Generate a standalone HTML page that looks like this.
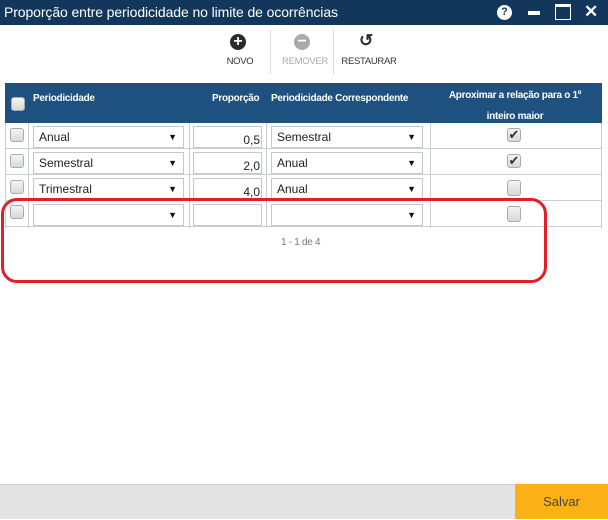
<!DOCTYPE html>
<html><head><style>
*{box-sizing:border-box;margin:0;padding:0}
body{width:608px;height:519px;position:relative;background:#fff;font-family:"Liberation Sans",sans-serif;overflow:hidden}
.a{position:absolute}
.tb{left:0;top:0;width:608px;height:25px;background:#13365b;color:#fff;font-size:14px;line-height:25px;padding-left:4px;letter-spacing:-0.1px}
.cb{width:14px;height:14px;border:1px solid #aaa;border-radius:3px;background:linear-gradient(#f4f4f4,#d8d8d8)}
.hd{left:5px;top:83px;width:597px;height:40px;background:#1e5080;color:#fff;font-size:10px;font-weight:bold;letter-spacing:-0.3px}
.row{left:5px;width:597px;height:26px;border-bottom:1px solid #c5d0d4}
.vl{width:1px;background:#c5d0d4}
.sel{height:22px;border:1px solid #c8c8c8;font-size:12px;line-height:20px;padding-left:5px;color:#222}
.sel:after{content:"▼";position:absolute;right:6px;top:0;font-size:9px;color:#111}
.inp{height:22px;border:1px solid #c8c8c8;font-size:12px;line-height:26px;text-align:right;padding-right:1px;color:#222}
.btn{font-size:9.5px;color:#333;text-align:center;letter-spacing:-0.3px}
.circ{width:16px;height:16px;border-radius:50%;color:#fff;font-weight:bold;font-size:16px;line-height:15px;text-align:center}
.ck{font-size:13px;line-height:12px;text-align:center;color:#333}
</style></head><body>
<div class="a tb">Proporção entre periodicidade no limite de ocorrências</div>
<div class="a" style="left:497px;top:5px;width:15px;height:15px;border-radius:50%;background:#fff;color:#13365b;font-size:11px;font-weight:bold;text-align:center;line-height:15px">?</div>
<div class="a" style="left:528px;top:11px;width:12px;height:4px;background:#fff"></div>
<div class="a" style="left:555px;top:4px;width:16px;height:16px;border:1.5px solid #fff;border-top-width:3px"></div>
<div class="a" style="left:584px;top:2px;color:#fff;font-size:17px;font-weight:bold">✕</div>

<div class="a circ" style="left:230px;top:34px;background:#2b2b2b">+</div>
<div class="a btn" style="left:222px;top:56px;width:36px">NOVO</div>
<div class="a" style="left:270px;top:30px;width:1px;height:44px;background:#ddd"></div>
<div class="a circ" style="left:294px;top:34px;background:#aaa">−</div>
<div class="a btn" style="left:280px;top:56px;width:50px;color:#aaa">REMOVER</div>
<div class="a" style="left:333px;top:30px;width:1px;height:44px;background:#ddd"></div>
<div class="a" style="left:359px;top:31px;font-size:17px;font-weight:bold;color:#2b2b2b">↺</div>
<div class="a btn" style="left:340px;top:56px;width:58px">RESTAURAR</div>

<div class="a hd">
 <div class="a cb" style="left:6px;top:14px"></div>
 <div class="a" style="left:28px;top:10px">Periodicidade</div>
 <div class="a" style="left:207px;top:10px">Proporção</div>
 <div class="a" style="left:266px;top:10px">Periodicidade Correspondente</div>
 <div class="a" style="left:425px;top:2px;width:170px;text-align:center;line-height:21px;white-space:nowrap">Aproximar a relação para o 1º<br>inteiro maior</div>
</div>

<div class="a" style="left:5px;top:123px;width:597px;height:105px;border-left:1px solid #c5d0d4;border-right:1px solid #c5d0d4"></div>
<div class="a vl" style="left:28px;top:123px;height:105px"></div>
<div class="a vl" style="left:189px;top:123px;height:105px"></div>
<div class="a vl" style="left:266px;top:123px;height:105px"></div>
<div class="a vl" style="left:430px;top:123px;height:105px"></div>

<div class="a row" style="top:123px"></div>
<div class="a row" style="top:149px"></div>
<div class="a row" style="top:175px"></div>
<div class="a row" style="top:201px"></div>

<div class="a cb" style="left:10px;top:128px"></div>
<div class="a sel" style="left:33px;top:126px;width:151px">Anual</div>
<div class="a inp" style="left:193px;top:126px;width:69px">0,5</div>
<div class="a sel" style="left:271px;top:126px;width:152px">Semestral</div>
<div class="a cb ck" style="left:507px;top:128px">✔</div>

<div class="a cb" style="left:10px;top:154px"></div>
<div class="a sel" style="left:33px;top:152px;width:151px">Semestral</div>
<div class="a inp" style="left:193px;top:152px;width:69px">2,0</div>
<div class="a sel" style="left:271px;top:152px;width:152px">Anual</div>
<div class="a cb ck" style="left:507px;top:154px">✔</div>

<div class="a cb" style="left:10px;top:180px"></div>
<div class="a sel" style="left:33px;top:178px;width:151px">Trimestral</div>
<div class="a inp" style="left:193px;top:178px;width:69px">4,0</div>
<div class="a sel" style="left:271px;top:178px;width:152px">Anual</div>
<div class="a cb" style="left:507px;top:180px;height:16px"></div>

<div class="a cb" style="left:10px;top:205px"></div>
<div class="a sel" style="left:33px;top:204px;width:151px"></div>
<div class="a inp" style="left:193px;top:204px;width:69px"></div>
<div class="a sel" style="left:271px;top:204px;width:152px"></div>
<div class="a cb" style="left:507px;top:206px;height:16px"></div>

<div class="a" style="left:281px;top:237px;font-size:10px;color:#777;letter-spacing:-0.3px">1 - 1 de 4</div>

<div class="a" style="left:1px;top:198px;width:546px;height:85px;border:3px solid #e41e26;border-radius:16px"></div>

<div class="a" style="left:0;top:484px;width:608px;height:35px;background:#e4e4e4;border-top:1px solid #d0d0d0"></div>
<div class="a" style="left:515px;top:484px;width:93px;height:35px;background:#fbb117;color:#444;font-size:13px;text-align:center;line-height:36px">Salvar</div>
</body></html>
